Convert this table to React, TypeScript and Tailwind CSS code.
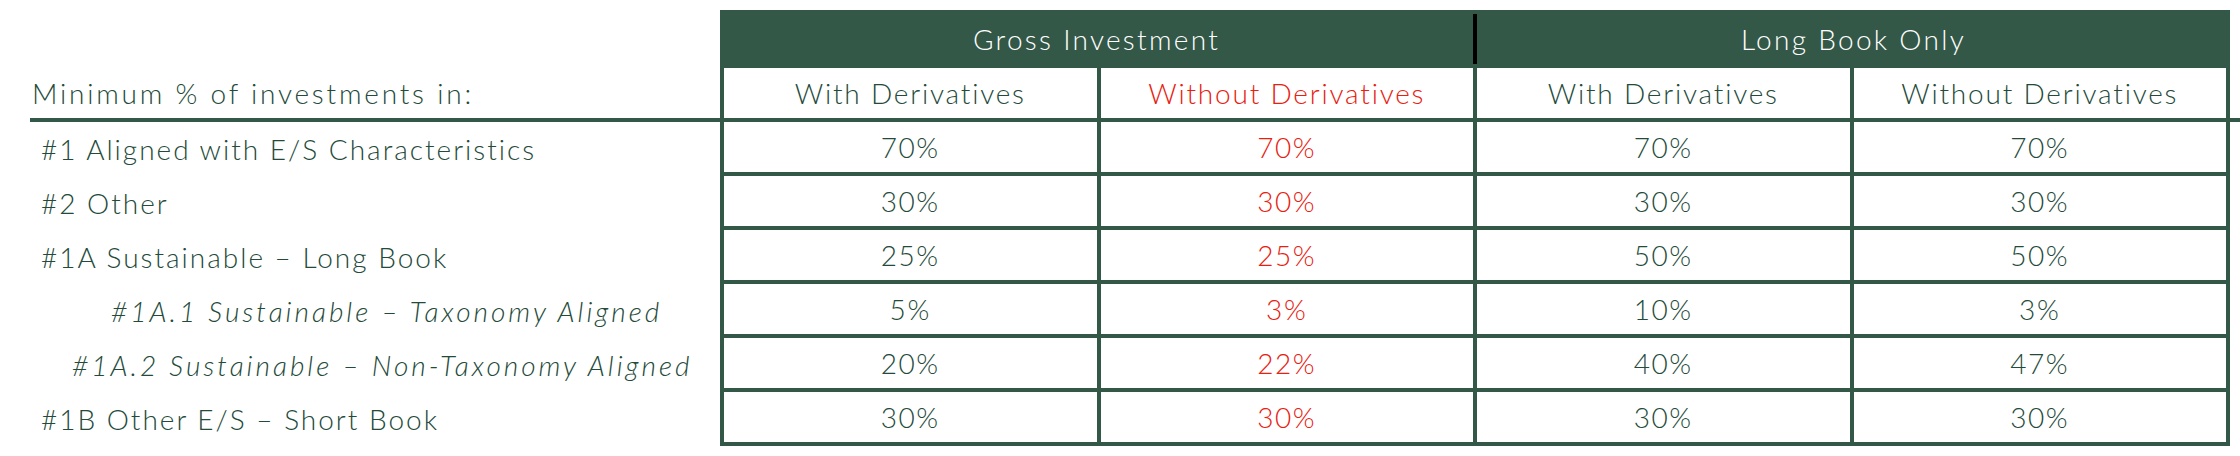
type Row = {
  label: string
  indent: string
  italic?: boolean
  values: [string, string, string, string]
}

const rows: Row[] = [
  { label: "#1 Aligned with E/S Characteristics", indent: "pl-[41px]", values: ["70%", "70%", "70%", "70%"] },
  { label: "#2 Other", indent: "pl-[41px]", values: ["30%", "30%", "30%", "30%"] },
  { label: "#1A Sustainable – Long Book", indent: "pl-[41px]", values: ["25%", "25%", "50%", "50%"] },
  {
    label: "#1A.1 Sustainable – Taxonomy Aligned",
    indent: "pl-[111px]",
    italic: true,
    values: ["5%", "3%", "10%", "3%"],
  },
  {
    label: "#1A.2 Sustainable – Non-Taxonomy Aligned",
    indent: "pl-[72px]",
    italic: true,
    values: ["20%", "22%", "40%", "47%"],
  },
  { label: "#1B Other E/S – Short Book", indent: "pl-[41px]", values: ["30%", "30%", "30%", "30%"] },
]

const subHeads = ["With Derivatives", "Without Derivatives", "With Derivatives", "Without Derivatives"]

export default function App() {
  return (
    <div
      className="h-[456px] w-[2240px] bg-white pt-[10px] text-[28px] font-light leading-none tracking-[1.6px] text-[#244a3a]"
      style={{ fontFamily: "Lato, 'Noto Sans', sans-serif" }}
    >
      {/* top header */}
      <div className="flex h-[58px]">
        <div className="w-[720px]" />
        <div className="flex w-[1510px] bg-[#335848] tracking-[2.3px] text-white">
          <div className="flex flex-1 items-center justify-center">Gross Investment</div>
          <div className="my-1 w-1 bg-black" />
          <div className="flex flex-1 items-center justify-center">Long Book Only</div>
        </div>
      </div>

      {/* sub header */}
      <div className="ml-[30px] flex h-[54px] border-b-4 border-[#335848]">
        <div className="flex w-[690px] items-center pl-[2px] tracking-[2.8px]">Minimum % of investments in:</div>
        <div className="grid w-[1510px] grid-cols-4 gap-x-1 border-x-4 border-[#335848] bg-[#335848] tracking-[1.8px]">
          {subHeads.map((head, i) => (
            <div
              key={i}
              className={`flex items-center justify-center bg-white ${i === 1 ? "text-[#e8200f]" : ""}`}
            >
              {head}
            </div>
          ))}
        </div>
      </div>

      {rows.map((row) => (
        <div key={row.label} className="flex h-[54px]">
          <div
            className={`flex w-[720px] items-center ${row.indent} ${
              row.italic ? "italic tracking-[3px]" : "tracking-[2px]"
            }`}
          >
            {row.label}
          </div>
          <div className="grid w-[1510px] grid-cols-4 gap-x-1 border-x-4 border-b-4 border-[#335848] bg-[#335848]">
            {row.values.map((value, i) => (
              <div
                key={i}
                className={`flex items-center justify-center bg-white ${i === 1 ? "text-[#e8200f]" : ""}`}
              >
                {value}
              </div>
            ))}
          </div>
        </div>
      ))}
    </div>
  )
}
